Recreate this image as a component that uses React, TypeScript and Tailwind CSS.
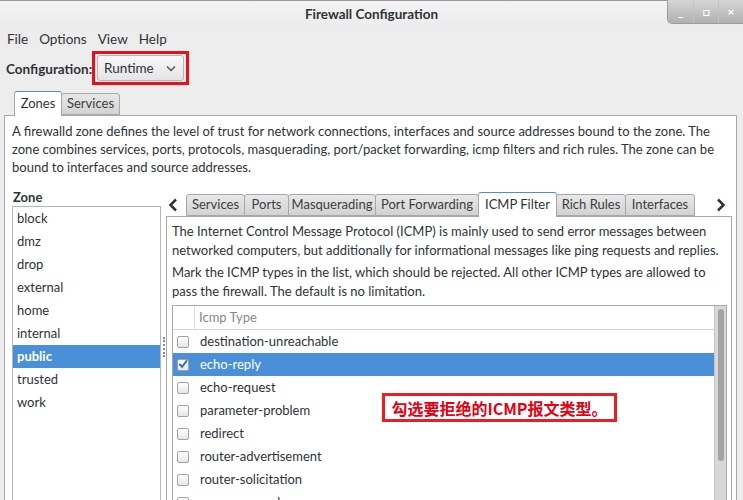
import React from "react";

const zones = ["block", "dmz", "drop", "external", "home", "internal", "public", "trusted", "work"];
const icmpTypes = [
  "destination-unreachable",
  "echo-reply",
  "echo-request",
  "parameter-problem",
  "redirect",
  "router-advertisement",
  "router-solicitation",
  "source-quench",
];

const subTabs = [
  { label: "Services", w: "w-[59px]" },
  { label: "Ports", w: "w-[45px]" },
  { label: "Masquerading", w: "w-[88px]" },
  { label: "Port Forwarding", w: "w-[104px]" },
  { label: "ICMP Filter", w: "w-[79px]", active: true },
  { label: "Rich Rules", w: "w-[70px]" },
  { label: "Interfaces", w: "w-[70px]" },
];

function Tab({ label, w, active }: { label: string; w: string; active?: boolean }) {
  if (active) {
    return (
      <div
        className={`${w} h-[25px] -mb-px flex items-center justify-center rounded-t-[3px] border border-b-0 border-[#a8a8a8] border-t-[#4a90d9] bg-white text-[#2e3436] z-10 -ml-px`}
      >
        {label}
      </div>
    );
  }
  return (
    <div
      className={`${w} h-[22px] flex items-center justify-center rounded-t-[3px] border border-[#a8a8a8] bg-gradient-to-b from-[#e8e8e8] to-[#d2d2d2] text-[#3a3f40] -ml-px first:ml-0`}
    >
      {label}
    </div>
  );
}

function CheckBox({ checked }: { checked?: boolean }) {
  return (
    <div className="w-[12px] h-[12px] rounded-[2px] border border-[#a2a2a2] bg-gradient-to-b from-white to-[#e6e6e6] flex items-center justify-center">
      {checked && (
        <svg width="11" height="11" viewBox="0 0 11 11">
          <path d="M2 5.5 L4.5 8 L9.5 1.5" stroke="#2a6bc0" strokeWidth="2" fill="none" strokeLinecap="round" />
        </svg>
      )}
    </div>
  );
}

export default function App() {
  return (
    <div
      className="w-[743px] h-[500px] overflow-hidden bg-[#ededed] text-[13px] text-[#2e3436] relative"
      style={{ fontFamily: 'Lato, "Open Sans", sans-serif' }}
    >
      {/* Title bar */}
      <div className="h-[27px] flex items-center justify-center border-t border-[#9a9a9a] bg-gradient-to-b from-[#f4f4f4] to-[#ececec] font-bold text-[13.5px] text-[#2e3436] relative">
        Firewall Configuration
        <div className="absolute right-0 -top-px h-[24px] flex rounded-bl-[5px] overflow-hidden border-l border-b border-[#9c9c9c]">
          {["_", "□", "×"].map((g, i) => (
            <div
              key={i}
              className="w-[25px] h-full flex items-center justify-center bg-gradient-to-b from-[#d6d6d6] to-[#b0b0b0] text-white font-bold text-[12px] border-l border-[#c4c4c4] first:border-l-0"
            >
              {g}
            </div>
          ))}
        </div>
      </div>

      {/* Menu bar */}
      <div className="h-[24px] flex items-center pl-[7px] gap-[11px] text-[13.5px]">
        <span>File</span>
        <span>Options</span>
        <span>View</span>
        <span>Help</span>
      </div>

      {/* Configuration row */}
      <div className="h-[34px] flex items-center pl-[6px] text-[13.5px]">
        <span className="font-bold w-[86px] pt-[2px]">Configuration:</span>
        <div className="h-[34px] w-[97px] border-[3px] border-[#e8101c] flex items-center justify-center">
          <div className="w-[87px] h-[26px] rounded-[3px] border border-[#b6b6b6] bg-gradient-to-b from-[#f8f8f8] to-[#e4e4e4] flex items-center justify-between pl-[6px] pr-[7px]">
            <span>Runtime</span>
            <svg width="10" height="7" viewBox="0 0 10 7">
              <path d="M1 1.5 L5 5.5 L9 1.5" stroke="#555" strokeWidth="1.5" fill="none" />
            </svg>
          </div>
        </div>
      </div>

      {/* Top tabs */}
      <div className="mt-[6px] pl-[15px] flex items-end h-[24px]">
        <Tab label="Zones" w="w-[48px]" active />
        <Tab label="Services" w="w-[59px]" />
      </div>

      {/* Outer notebook page */}
      <div className="ml-[4px] w-[733px] h-[400px] border border-[#a8a8a8] bg-white">
        <div className="pl-[7px] pt-[6px] leading-[18px] whitespace-nowrap">
          A firewalld zone defines the level of trust for network connections, interfaces and source addresses bound to the zone. The
          <br />
          zone combines services, ports, protocols, masquerading, port/packet forwarding, icmp filters and rich rules. The zone can be
          <br />
          bound to interfaces and source addresses.
        </div>

        <div className="flex mt-[13px] pl-[7px]">
          {/* Zone list */}
          <div className="w-[149px] flex flex-col">
            <div className="font-bold pl-px h-[17px] leading-[17px]">Zone</div>
            <div className="border border-[#b6b6b6] h-[300px]">
              {zones.map((z) => (
                <div
                  key={z}
                  className={`h-[23px] flex items-center pl-[4px] ${
                    z === "public" ? "bg-[#4a90d9] text-white font-bold" : ""
                  }`}
                >
                  {z}
                </div>
              ))}
            </div>
          </div>

          {/* Pane handle */}
          <div className="w-[5px] flex justify-center pt-[148px]">
            <div className="w-[2px] h-[20px] border-l-2 border-dotted border-[#8a8a8a]" />
          </div>

          {/* Right notebook */}
          <div className="w-[566px] flex flex-col pt-[2px]">
            <div className="h-[25px] flex items-end">
              <div className="w-[21px] h-[22px] flex items-center pl-[2px]">
                <svg width="10" height="14" viewBox="0 0 10 14">
                  <path d="M8 1.5 L2.5 7 L8 12.5" stroke="#2e3436" strokeWidth="2.5" fill="none" />
                </svg>
              </div>
              {subTabs.map((t) => (
                <Tab key={t.label} {...t} />
              ))}
              <div className="ml-auto w-[16px] h-[22px] flex items-center">
                <svg width="10" height="14" viewBox="0 0 10 14">
                  <path d="M2 1.5 L7.5 7 L2 12.5" stroke="#2e3436" strokeWidth="2.5" fill="none" />
                </svg>
              </div>
            </div>
            <div className="border border-[#a8a8a8] h-[300px] bg-white pl-[5px] pr-[4px]">
              <div className="pt-[5px] leading-[19px] whitespace-nowrap">
                The Internet Control Message Protocol (ICMP) is mainly used to send error messages between
                <br />
                networked computers, but additionally for informational messages like ping requests and replies.
              </div>
              <div className="mt-[3px] leading-[19px] whitespace-nowrap">
                Mark the ICMP types in the list, which should be rejected. All other ICMP types are allowed to
                <br />
                pass the firewall. The default is no limitation.
              </div>

              {/* Tree view */}
              <div className="mt-[4px] w-[555px] h-[210px] border border-[#a8a8a8] flex">
                <div className="flex-1 flex flex-col">
                  <div className="h-[24px] shrink-0 flex border-b border-[#d4d4d4]">
                    <div className="w-[22px] border-r border-[#dcdcdc]" />
                    <div className="pl-[4px] flex items-center text-[#888a85]">Icmp Type</div>
                  </div>
                  {icmpTypes.map((t) => {
                    const sel = t === "echo-reply";
                    return (
                      <div
                        key={t}
                        className={`h-[23px] shrink-0 flex items-center ${sel ? "bg-[#4a90d9] text-white" : ""}`}
                      >
                        <div className="w-[20px] flex justify-center">
                          <CheckBox checked={sel} />
                        </div>
                        <span className="pl-[7px]">{t}</span>
                      </div>
                    );
                  })}
                </div>
                {/* Scrollbar */}
                <div className="w-[12px] bg-[#d8d8d8] border-l border-[#c4c4c4] pt-[3px] flex justify-center">
                  <div className="w-[6px] h-[152px] rounded-[3px] bg-[#a3a3a3]" />
                </div>
              </div>
            </div>
          </div>
        </div>
      </div>

      {/* Annotation */}
      <div
        className="absolute left-[382px] top-[393px] w-[235px] h-[29px] border-[3px] border-[#ee1c25] bg-white flex items-center justify-center text-[#e60012] font-bold text-[16px] leading-none"
        style={{ fontFamily: '"Noto Sans CJK SC", sans-serif' }}
      >
        勾选要拒绝的ICMP报文类型。
      </div>
    </div>
  );
}
